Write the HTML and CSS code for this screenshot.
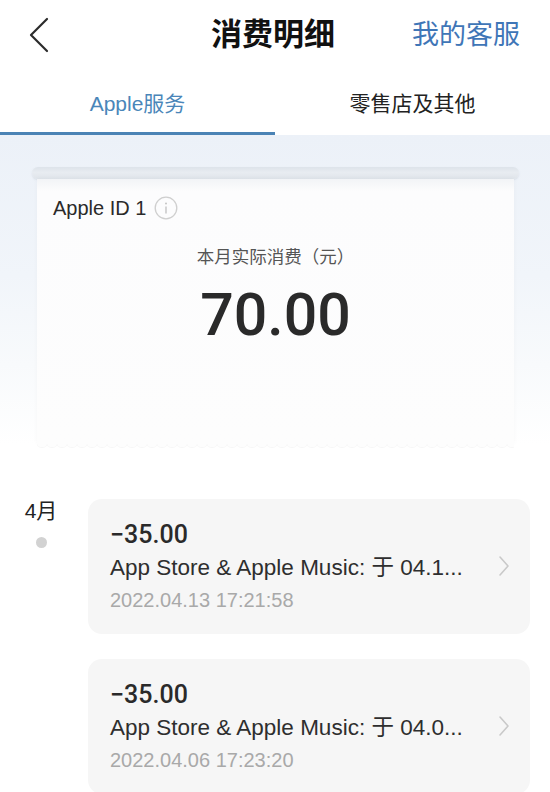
FILE: index.html
```html
<!DOCTYPE html>
<html lang="zh-CN">

<head>
    <meta charset="UTF-8">
    <meta name="viewport" content="width=device-width, initial-scale=1.0">
    <title>消费明细</title>
    <link rel="stylesheet" href="styles.css">
</head>

<body>
    <div class="header">
        <a href="javascript:;" class="back">
            <svg width="22" height="36" viewBox="0 0 22 36">
                <polyline points="19,2 3,18 19,34" fill="none" stroke="#2b2b2b" stroke-width="2.2" stroke-linecap="round" stroke-linejoin="round" />
            </svg>
        </a>
        <h1 class="title">消费明细</h1>
        <a href="javascript:;" class="service">我的客服</a>
    </div>

    <div class="tabs">
        <a href="javascript:;" class="tab current">Apple服务</a>
        <a href="javascript:;" class="tab">零售店及其他</a>
    </div>

    <div class="hero">
        <div class="receipt">
            <div class="roller"></div>
            <div class="paper">
                <div class="account">
                    Apple ID 1
                    <svg class="info" width="24" height="24" viewBox="0 0 24 24">
                        <circle cx="12" cy="12" r="10.8" fill="none" stroke="#cfcfcf" stroke-width="1.3" />
                        <circle cx="12" cy="7.4" r="1" fill="#c4c4c4" />
                        <line x1="12" y1="10.5" x2="12" y2="17.5" stroke="#c4c4c4" stroke-width="1.4" />
                    </svg>
                </div>
                <p class="label">本月实际消费（元）</p>
                <p class="total">70.00</p>
            </div>
        </div>
    </div>

    <div class="list">
        <div class="month">
            <span class="month-name">4月</span>
            <i class="dot"></i>
        </div>
        <div class="items">
            <div class="item">
                <div class="info-text">
                    <p class="amount">−35.00</p>
                    <p class="desc">App Store &amp; Apple Music: 于 04.1...</p>
                    <p class="time">2022.04.13 17:21:58</p>
                </div>
                <svg class="arrow" width="12" height="22" viewBox="0 0 12 22">
                    <polyline points="2,2 10,11 2,20" fill="none" stroke="#c9c9c9" stroke-width="1.6" stroke-linecap="round" stroke-linejoin="round" />
                </svg>
            </div>
            <div class="item">
                <div class="info-text">
                    <p class="amount">−35.00</p>
                    <p class="desc">App Store &amp; Apple Music: 于 04.0...</p>
                    <p class="time">2022.04.06 17:23:20</p>
                </div>
                <svg class="arrow" width="12" height="22" viewBox="0 0 12 22">
                    <polyline points="2,2 10,11 2,20" fill="none" stroke="#c9c9c9" stroke-width="1.6" stroke-linecap="round" stroke-linejoin="round" />
                </svg>
            </div>
        </div>
    </div>
</body>

</html>
```

FILE: styles.css
```css
* {
    margin: 0;
    padding: 0;
    box-sizing: border-box;
}

a {
    text-decoration: none;
}

body {
    width: 550px;
    height: 792px;
    overflow: hidden;
    background-color: #fff;
    color: #222;
    font-family: "Liberation Sans", "Noto Sans CJK SC", sans-serif;
}

/* 顶部导航 */
.header {
    display: grid;
    grid-template-columns: 1fr auto 1fr;
    align-items: center;
    height: 70px;
    padding: 0 30px 0 28px;
}

.back {
    display: flex;
    align-items: center;
    height: 36px;
}

.title {
    font-size: 31px;
    font-weight: 700;
    color: #111;
    line-height: 40px;
    margin-left: -2px;
}

.service {
    justify-self: end;
    font-size: 27px;
    color: #3f76b7;
    line-height: 40px;
}

/* 标签 */
.tabs {
    display: flex;
    height: 65px;
}

.tab {
    flex: 1;
    padding-top: 22px;
    text-align: center;
    font-size: 21px;
    line-height: 24px;
    color: #222;
    border-bottom: 3px solid transparent;
}

.tab.current {
    color: #4a86b9;
    border-bottom-color: #4b83b5;
}

/* 小票 */
.hero {
    padding: 32px 31px 56px 32px;
    background: linear-gradient(#ecf1f8 0, #f1f5fa 140px, #f8fafc 230px, #fff 310px);
}

.receipt {
    position: relative;
}

.roller {
    height: 12px;
    border-radius: 6px;
    background: linear-gradient(#dde3ea, #e8ecf1 45%, #dfe4ea);
    box-shadow: 0 1px 2px rgba(120, 135, 155, .18);
}

.paper {
    position: relative;
    margin: 0 5px;
    height: 264px;
    padding: 16px 16px 0;
    background: linear-gradient(#f2f4f7 0, #fcfcfd 12px, #fdfdfd 100%);
    box-shadow: 0 0 5px rgba(0, 0, 0, .035);
}

.paper::after {
    content: '';
    position: absolute;
    left: 0;
    right: 0;
    bottom: -5px;
    height: 6px;
    background: radial-gradient(circle at 5px 0, #fdfdfd 5px, rgba(0, 0, 0, .03) 5.5px, transparent 6.5px) repeat-x;
    background-size: 10px 6px;
}

.account {
    display: flex;
    align-items: center;
    font-size: 20px;
    line-height: 26px;
    color: #2a2a2a;
}

.info {
    margin-left: 8px;
}

.label {
    margin-top: 25px;
    text-align: center;
    font-size: 17.5px;
    line-height: 22px;
    color: #555;
}

.total {
    margin-top: 12px;
    text-align: center;
    font-family: Roboto, "Liberation Sans", sans-serif;
    font-size: 59px;
    font-weight: 500;
    line-height: 70px;
    color: #2a2a2a;
}

/* 账单列表 */
.list {
    display: flex;
    padding-left: 24px;
}

.month {
    display: flex;
    flex-direction: column;
    align-items: center;
    width: 34px;
    margin-right: 30px;
}

.month-name {
    font-size: 21px;
    line-height: 24px;
    color: #222;
}

.dot {
    width: 11px;
    height: 11px;
    margin-top: 14px;
    border-radius: 50%;
    background-color: #d2d2d2;
}

.items {
    display: flex;
    flex-direction: column;
    gap: 25px;
    width: 442px;
}

.item {
    display: flex;
    align-items: center;
    padding: 19px 20px 17px 22px;
    border-radius: 14px;
    background-color: #f6f6f6;
}

.info-text {
    flex: 1;
}

.info-text p {
    line-height: 33px;
    white-space: nowrap;
}

.amount {
    font-family: Roboto, "Liberation Sans", sans-serif;
    font-size: 25px;
    font-weight: 500;
    color: #2a2a2a;
}

.desc {
    font-size: 22.5px;
    color: #2e2e2e;
}

.time {
    font-size: 20px;
    color: #a9a9a9;
}

.arrow {
    margin-top: -4px;
}
```
